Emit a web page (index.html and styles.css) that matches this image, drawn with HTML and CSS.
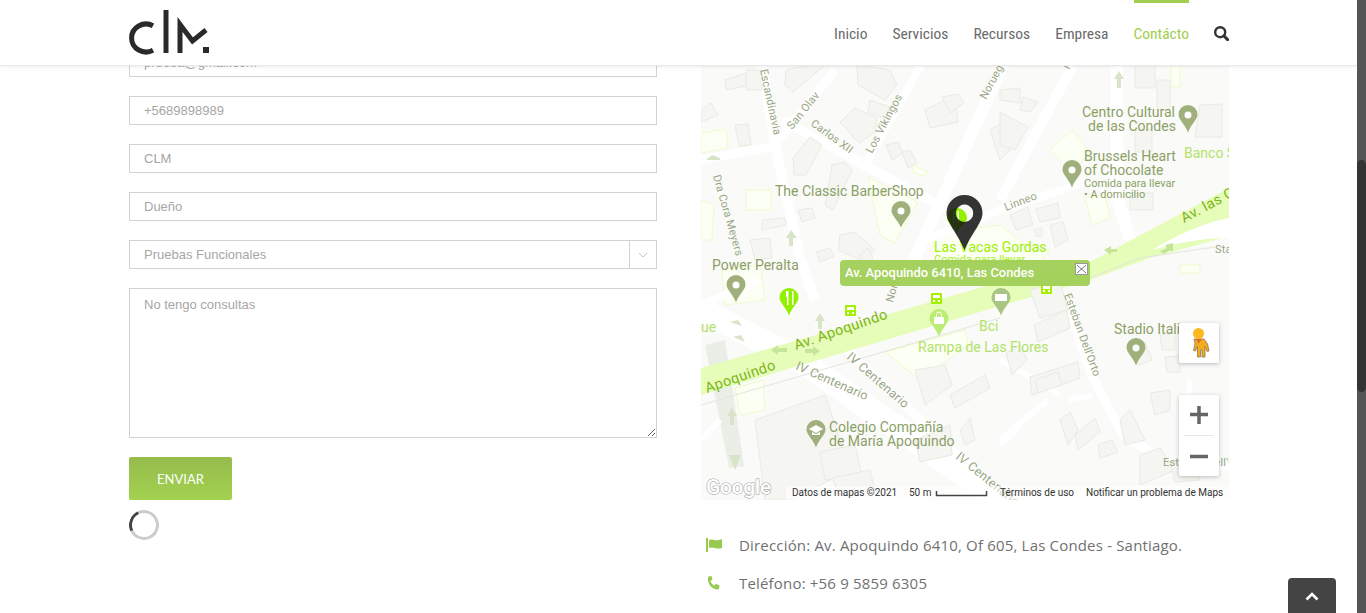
FILE: index.html
```html
<!DOCTYPE html>
<html lang="es">
<head>
<meta charset="utf-8">
<title>CLM - Contácto</title>
<link rel="stylesheet" href="styles.css">
</head>
<body>
<div class="viewport">
  <header class="site-header">
    <div class="header-inner">
      <a class="logo" href="#" aria-label="CLM">
        <svg width="82" height="46" viewBox="129 9 82 46">
          <path class="logo-stroke" d="M153 25.700A14.500 14 0 1 0 153 50.300"/>
          <path class="logo-stroke" d="M166 10V53"/>
          <path class="logo-stroke" d="M180 53V24.500L192.500 41L206 30"/>
          <rect class="logo-dot" x="203" y="47" width="6" height="6"/>
        </svg>
      </a>
      <nav class="nav">
        <a href="#">Inicio</a>
        <a href="#">Servicios</a>
        <a href="#">Recursos</a>
        <a href="#">Empresa</a>
        <a href="#" class="active">Contácto</a>
        <a href="#" class="search" aria-label="Buscar">
          <svg width="15" height="15" viewBox="0 0 15 15"><circle cx="6.200" cy="6.200" r="5" class="search-ring"/><path d="M9.800 9.800L13.600 13.600" class="search-handle"/></svg>
        </a>
      </nav>
    </div>
  </header>

  <main class="content">
    <form class="form">
      <input class="field" type="text" value="prueba@gmail.com">
      <input class="field" type="text" value="+5689898989">
      <input class="field" type="text" value="CLM">
      <input class="field" type="text" value="Dueño">
      <div class="select">
        <span class="select-value">Pruebas Funcionales</span>
        <span class="select-arrow"><svg width="10" height="6" viewBox="0 0 10 6"><path d="M1 1L5 5L9 1"/></svg></span>
      </div>
      <textarea class="message">No tengo consultas</textarea>
      <button class="submit" type="button">ENVIAR</button>
      <div class="spinner"></div>
    </form>

    <section class="aside">
      <div class="map">
        <svg class="map-canvas" width="528" height="435" viewBox="701 65 528 435">
          <rect class="m-bg" x="701" y="65" width="528" height="435"/>

          <g class="m-park">
            <path d="M701 133L726 129L728 148L701 153Z"/>
            <path d="M746 190L771 190L771 210L746 210Z"/>
            <path d="M868 177L918 202L895 243L880 235Z"/>
            <path d="M912 165L928 172L922 176L913 172Z"/>
            <path d="M1050 150L1072 130L1090 152L1072 172Z"/>
            <path d="M1085 198L1105 195L1110 218L1092 225Z"/>
            <path d="M722 270L760 265L765 300L725 305Z"/>
            <path d="M735 388L763 380L765 410L740 415Z"/>
            <path d="M885 352L965 330L968 345L920 380Z"/>
            <path d="M1180 265L1200 265L1200 273L1180 273Z"/>
            <path d="M930 235L1000 225L1030 248L1050 250L1040 262L940 262Z"/>
            <path d="M701 200L714 205L712 240L701 240Z"/>
            <path d="M1171 65H1180V87H1171Z"/>
          </g>

          <g class="m-road-grey">
            <path d="M705 345L725 340L744 466L729 468Z"/>
          </g>

          <g class="m-road">
            <path d="M762 65L775 145L800 258L815 300" stroke-width="10"/>
            <path d="M835 70L772 148" stroke-width="9"/>
            <path d="M701 160L775 146" stroke-width="9"/>
            <path d="M782 120L925 198L945 208" stroke-width="9"/>
            <path d="M921 65L862 170" stroke-width="8"/>
            <path d="M1003 65L913 262" stroke-width="12"/>
            <path d="M1073 65L1000 200" stroke-width="10"/>
            <path d="M925 240L1000 210L1085 182" stroke-width="8"/>
            <path d="M1117 65V198L1130 240" stroke-width="12"/>
            <path d="M701 310L800 360L1000 500" stroke-width="24"/>
            <path d="M847 350L1005 500" stroke-width="9"/>
            <path d="M1063 295L1093 378L1123 435L1170 464L1229 466" stroke-width="9"/>
            <path d="M701 305L760 280" stroke-width="8"/>
            <path d="M1000 360L1060 395" stroke-width="6"/>
            <path d="M1068 400L1092 396" stroke-width="6"/>
            <path d="M1190 380L1188 400" stroke-width="6"/>
            <path d="M701 440L720 420" stroke-width="6"/>
            <path d="M1000 445L1020 425" stroke-width="6"/>
            <path d="M1000 440L1048 400" stroke-width="6"/>
          </g>

          <path class="m-ave" d="M701 368L1000 282L1090 262L1229 188V236L1150 258L1090 280L1000 306L701 395Z"/>
          <path class="m-median" d="M1152 250C1175 236 1205 222 1229 218V238C1200 238 1175 244 1152 250Z"/>
          <path class="m-thin" d="M1090 278L1140 258L1215 247"/>
          <path class="m-thin" d="M701 405L1000 318"/>

          <g class="m-bld">
            <path d="M725 80L746 73L746 86L726 90Z"/>
            <path d="M746 70H762V90H746Z"/>
            <path d="M786 70L810 65H825L793 92L785 85Z"/>
            <path d="M857 65L890 70L897 85L885 100L858 85Z"/>
            <path d="M870 100L890 107L885 118L868 112Z"/>
            <path d="M840 122L855 108L877 118L875 132L859 143Z"/>
            <path d="M735 125L748 124L751 145L739 146Z"/>
            <path d="M701 110L711 103L718 115L701 122Z"/>
            <path d="M793 158L810 137L822 145L806 175L794 175Z"/>
            <path d="M832 165L845 162L852 170L833 210L825 205Z"/>
            <path d="M886 145L898 142L903 153L892 160Z"/>
            <path d="M902 152L910 150L917 163L908 168Z"/>
            <path d="M925 110L955 95L958 122L930 128Z"/>
            <path d="M942 97L958 94L964 103L950 113Z"/>
            <path d="M990 130L1000 124L1020 140L1000 160Z"/>
            <path d="M1000 90L1020 88L1020 103L1000 100Z"/>
            <path d="M1023 97L1038 102L1030 112L1020 110Z"/>
            <path d="M1000 112L1028 127L1015 150L1000 145Z"/>
            <path d="M1135 65H1155V88H1135Z"/>
            <path d="M1157 80H1170V110H1157Z"/>
            <path d="M1200 105L1222 104L1222 137H1195Z"/>
            <path d="M1135 130H1152V152H1135Z"/>
            <path d="M1130 193H1153V210H1130Z"/>
            <path d="M1010 215L1028 207L1033 225L1016 230Z"/>
            <path d="M1036 209L1058 203L1060 218L1040 222Z"/>
            <path d="M1034 230L1042 228L1042 236L1036 236Z"/>
            <path d="M1050 225L1063 222L1068 240L1055 247Z"/>
            <path d="M750 240L770 238L772 258L755 260Z"/>
            <path d="M762 220L785 218L786 225L762 230Z"/>
            <path d="M798 210L812 208L815 218L802 222Z"/>
            <path d="M840 235L855 232L875 250L865 262L838 250Z"/>
            <path d="M816 252L830 248L834 256L820 262Z"/>
            <path d="M860 255L868 248L873 258L865 265Z"/>
            <path d="M1030 290L1060 282L1068 310L1040 318Z"/>
            <path d="M1034 325L1067 310L1070 328L1038 342Z"/>
            <path d="M1006 353L1020 345L1027 360L1012 375Z"/>
            <path d="M1030 377L1078 362L1080 378L1032 395Z"/>
            <path d="M915 370L945 365L952 385L925 405Z"/>
            <path d="M950 395L985 375L990 388L955 408Z"/>
            <path d="M1035 380L1058 372L1062 385L1038 393Z"/>
            <path d="M1060 420L1070 412L1078 430L1068 445Z"/>
            <path d="M1075 435L1095 418L1100 432L1078 450Z"/>
            <path d="M1132 350L1145 342L1152 360L1138 365Z"/>
            <path d="M1160 335L1175 333V350H1162Z"/>
            <path d="M1165 357L1180 356V372L1167 372Z"/>
            <path d="M1150 393L1170 390L1170 410L1155 415Z"/>
            <path d="M1120 420L1130 410L1145 440L1125 445Z"/>
            <path d="M1098 445L1112 440L1118 452L1100 458Z"/>
            <path d="M1140 455L1160 448L1175 470L1140 485Z"/>
            <path d="M1170 462L1195 460L1200 480L1175 482Z"/>
            <path d="M755 420L825 395L850 470L790 500H765Z"/>
            <path d="M820 452L855 445L862 475L825 480Z"/>
            <path d="M832 478L870 470L875 490L840 495Z"/>
            <path d="M915 440L950 425L952 455L920 462Z"/>
            <path d="M960 430L970 418L975 440L965 445Z"/>
          </g>

          <g class="m-arrow">
            <path d="M706 160H720V158L712 155L706 160Z"/>
            <path d="M791 230L786 238H789V246H793V238H797Z"/>
            <path d="M1119 71L1114 79H1117V88H1121V79H1124Z"/>
            <path d="M820 313L815 321H818V329H822V321H825Z"/>
            <path d="M732 408L727 416H730V425H734V416H737Z"/>
            <path d="M730 322L742 326L738 320Z"/>
            <path d="M733 337L745 342L741 335Z"/>
            <path d="M729 455L735 470L741 455Z"/>
          </g>
          <g class="m-arrow-g">
            <path d="M771 350L778 345V348H787V352H778V355Z"/>
            <path d="M820 351L813 346V349H805V353H813V356Z"/>
            <path d="M1104 250L1111 246V249H1117V252H1111V255Z"/>
            <path d="M1173 243L1165 245L1167 248L1160 251L1164 254L1170 250L1173 252Z"/>
          </g>

          <g class="t-road">
            <text transform="translate(760 70) rotate(78)">Escandinavia</text>
            <text transform="translate(792 130) rotate(-51)">San Olav</text>
            <text transform="translate(810 125) rotate(36)">Carlos XII</text>
            <text transform="translate(872 154) rotate(-62)">Los Vikingos</text>
            <text transform="translate(986 100) rotate(-62)">Noruega</text>
            <text transform="translate(1069 70) rotate(-62)">I</text>
            <text transform="translate(713 176) rotate(74)">Dra Cora Meyers</text>
            <text transform="translate(1006 211) rotate(-21)">Linneo</text>
            <text transform="translate(893 303) rotate(-75)">Norte</text>
            <text transform="translate(1064 295) rotate(70)">Esteban Dell'Orto</text>
            <text class="t-wide" transform="translate(795 369) rotate(24)">IV Centenario</text>
            <text class="t-wide" transform="translate(846 358) rotate(41)">IV Centenario</text>
            <text class="t-wide" transform="translate(955 458) rotate(39)">IV Centenario</text>
            <text x="1163" y="466">Esteban Dell'Orto</text>
            <text x="1215" y="253">Sta</text>
          </g>

          <g class="t-poi">
            <text x="775" y="196">The Classic BarberShop</text>
            <text x="712" y="270">Power Peralta</text>
            <text x="1082" y="117">Centro Cultural</text>
            <text x="1088" y="131">de las Condes</text>
            <text x="1084" y="161">Brussels Heart</text>
            <text x="1084" y="175">of Chocolate</text>
            <text class="t-sub" x="1084" y="187">Comida para llevar</text>
            <text class="t-sub" x="1084" y="198">• A domicilio</text>
            <text x="1114" y="334">Stadio Itali</text>
            <text x="829" y="432">Colegio Compañía</text>
            <text x="829" y="446">de María Apoquindo</text>
          </g>

          <g class="t-ave">
            <text transform="translate(796 350) rotate(-19)">Av. Apoquindo</text>
            <text transform="translate(707 393) rotate(-19)">Apoquindo</text>
            <text transform="translate(1184 223) rotate(-28)">Av. las Condes</text>
          </g>

          <g class="t-lime">
            <text x="1184" y="158">Banco S</text>
            <text x="918" y="352">Rampa de Las Flores</text>
            <text x="979" y="331">Bci</text>
            <text x="701" y="332">ue</text>
          </g>

          <text class="t-vacas" x="934" y="252">Las Vacas Gordas</text>
          <text class="t-vacas-sub" x="934" y="263">Comida para llevar</text>

          <g class="pin-poi">
            <path d="M901 201a9.500 9.500 0 0 1 9.500 9.500c0 5-6 9-9.500 17c-3.500-8-9.500-12-9.500-17a9.500 9.500 0 0 1 9.500-9.500Z"/>
            <path d="M1188 105a9.500 9.500 0 0 1 9.500 9.500c0 5-6 9-9.500 18c-3.500-9-9.500-13-9.500-18a9.500 9.500 0 0 1 9.500-9.500Z"/>
            <path d="M1072 160a9.500 9.500 0 0 1 9.500 9.500c0 5-6 9-9.500 18c-3.500-9-9.500-13-9.500-18a9.500 9.500 0 0 1 9.500-9.500Z"/>
            <path d="M1136 338a9.500 9.500 0 0 1 9.500 9.500c0 5-6 9-9.500 18c-3.500-9-9.500-13-9.500-18a9.500 9.500 0 0 1 9.500-9.500Z"/>
            <path d="M736 275a9.500 9.500 0 0 1 9.500 9.500c0 5-6 9-9.500 18c-3.500-9-9.500-13-9.500-18a9.500 9.500 0 0 1 9.500-9.500Z"/>
            <path d="M816 420a9.500 9.500 0 0 1 9.500 9.500c0 5-6 9-9.500 18c-3.500-9-9.500-13-9.500-18a9.500 9.500 0 0 1 9.500-9.500Z"/>
          </g>
          <path class="pin-bank" d="M1001 288a9.500 9.500 0 0 1 9.500 9.500c0 5-6 9-9.500 18c-3.500-9-9.500-13-9.500-18a9.500 9.500 0 0 1 9.500-9.500Z"/>
          <g class="pin-hole">
            <circle cx="901" cy="211" r="3.500"/>
            <circle cx="1188" cy="115" r="3.500"/>
            <circle cx="1072" cy="170" r="3.500"/>
            <circle cx="1136" cy="348" r="3.500"/>
            <circle cx="736" cy="285" r="3.500"/>
          </g>
          <path class="pin-hole" d="M809 429L816 425L823 429L816 433Z"/>
          <path class="pin-hole" d="M812 432V435H820V432L816 434Z"/>
          <rect class="pin-hole" x="995" y="294" width="12" height="7"/>

          <path class="pin-lime" d="M789 288a9.500 9.500 0 0 1 9.500 9.500c0 5-6 9-9.500 18c-3.500-9-9.500-13-9.500-18a9.500 9.500 0 0 1 9.500-9.500Z"/>
          <path class="pin-lime-soft" d="M939 309a9.500 9.500 0 0 1 9.500 9.500c0 5-6 9-9.500 18c-3.500-9-9.500-13-9.500-18a9.500 9.500 0 0 1 9.500-9.500Z"/>
          <path class="pin-hole" d="M786 291V297h1v8h1.500v-14ZM792 291v14h1.500v-14Z"/>
          <rect class="pin-hole" x="934" y="317" width="10" height="7"/>
          <path class="bag-handle" d="M936.500 317v-2.500a2.500 2.500 0 0 1 5 0v2.500"/>

          <g class="bus">
            <rect x="931" y="293" width="11" height="11" rx="1"/>
            <rect x="845" y="305" width="11" height="11" rx="1"/>
            <rect x="1041" y="284" width="11" height="10" rx="1"/>
          </g>
          <g class="bus-in">
            <rect x="933" y="295" width="7" height="3"/>
            <rect x="847" y="307" width="7" height="3"/>
            <rect x="1043" y="286" width="7" height="3"/>
            <rect x="933" y="300" width="2" height="2"/>
            <rect x="938" y="300" width="2" height="2"/>
            <rect x="847" y="312" width="2" height="2"/>
            <rect x="852" y="312" width="2" height="2"/>
            <rect x="1043" y="290" width="2" height="2"/>
            <rect x="1048" y="290" width="2" height="2"/>
          </g>

          <path class="pin-lime" d="M957 208a10 10 0 0 1 10 10c0 5-6 7-10 15c-4-8-10-10-10-15a10 10 0 0 1 10-10Z"/>
          <path class="pin-hole" d="M953 211h1.200v12h-1.200ZM957.500 211h1.500v12h-1.500Z"/>
          <path class="pin-main" fill-rule="evenodd" d="M964.500 195a18 18 0 0 1 18 18c0 10-11 20-18 37c-7-17-18-27-18-37a18 18 0 0 1 18-18ZM964.500 204.500a8.700 8.700 0 1 0 0.010 0Z"/>

          <g class="tip">
            <rect class="tip-bg" x="840" y="260" width="250" height="26" rx="4"/>
            <text class="tip-text" x="845" y="277">Av. Apoquindo 6410, Las Condes</text>
            <rect class="tip-x-box" x="1075.500" y="263.500" width="12" height="11"/>
            <path class="tip-x" d="M1077 265L1086 273M1086 265L1077 273"/>
          </g>

          <text class="t-google" x="706" y="494">Google</text>

          <rect class="m-foot" x="786" y="486" width="443" height="14"/>
          <g class="t-foot">
            <text x="792" y="496">Datos de mapas ©2021</text>
            <text x="909" y="496">50 m</text>
            <text x="1000" y="496">Términos de uso</text>
            <text x="1086" y="496">Notificar un problema de Maps</text>
          </g>
          <path class="m-scale" d="M936.500 491V495.500H986.500V491"/>

          <g class="ctl">
            <rect x="1179" y="323" width="40" height="40" rx="2"/>
            <rect x="1179" y="395" width="40" height="81" rx="2"/>
          </g>
          <path class="ctl-div" d="M1184 435.500H1214"/>
          <path class="ctl-sign" d="M1190 414.500H1208M1199 406V424M1190 456.500H1208"/>
          <g class="peg">
            <path class="peg-body" d="M1194 339h10l3.500 5 1.500 7-2 .5-2-5V357h-3v-7h-1.500v7h-3v-11l-2 5-2-.5 1.500-7Z"/>
            <circle class="peg-head" cx="1198.500" cy="333.500" r="5.500"/>
            <path class="peg-scarf" d="M1195.500 339h6.500l-3.200 4.500Z"/>
          </g>
        </svg>
      </div>

      <ul class="contact">
        <li>
          <svg class="contact-icon" width="17" height="14" viewBox="0 0 17 14"><path d="M0 0H2V14H0Z"/><path d="M3 2C7 0 9 4 16 1V10C10 12 7 8 3 10Z"/></svg>
          <span>Dirección: Av. Apoquindo 6410, Of 605, Las Condes - Santiago.</span>
        </li>
        <li>
          <svg class="contact-icon" width="17" height="14" viewBox="0 0 17 14"><path d="M2.500 0.500L5.500 0L6.500 3.500L4.500 5C5.200 7 6.500 8.500 8.500 9.500L10 7.800L13.500 9.500L13 12.500C12.500 13.500 11 13.800 9.500 13.200C5 12 2 8 2 3C2 2 2 1 2.500 0.500Z"/></svg>
          <span>Teléfono: +56 9 5859 6305</span>
        </li>
      </ul>
    </section>
  </main>

  <a class="to-top" href="#" aria-label="Subir">
    <svg width="14" height="9" viewBox="0 0 14 9"><path d="M1.500 7.500L7 2L12.500 7.500"/></svg>
  </a>
</div>
<div class="scrollbar"><div class="thumb"></div></div>
</body>
</html>
```
FILE: styles.css
```css
* { box-sizing: border-box; }
html, body { height: 100%; margin: 0; overflow: hidden; }
body { display: flex; background: #fff; font-family: "Liberation Sans", Arial, sans-serif; }

.viewport { position: relative; flex: 1; height: 613px; overflow: hidden; background: #fff; }

.scrollbar { width: 9px; height: 613px; background: #555; padding-top: 160px; }
.thumb { height: 232px; background: #333; border-radius: 5px; }

.site-header {
  position: absolute; top: 0; left: 0; right: 0; height: 66px; background: #fff;
  border-bottom: 1px solid #e9e9e9; box-shadow: 0 1px 3px rgba(0,0,0,.07); z-index: 5;
}
.header-inner { width: 1100px; margin-left: 129px; height: 65px; display: flex; justify-content: space-between; }
.logo { display: block; margin-top: 9px; height: 46px; }
.logo-stroke { fill: none; stroke: #2a2a2a; stroke-width: 5; }
.logo-dot { fill: #2a2a2a; }

.nav { display: flex; gap: 25px; align-items: stretch; font-family: "Liberation Sans Narrow", "Roboto Condensed", Roboto, sans-serif; font-size: 15.500px; }
.nav a { display: flex; align-items: center; color: #6a6a6a; text-decoration: none; border-top: 3px solid transparent; height: 65px; padding-bottom: 1px; }
.nav a.active { color: #a0ce4e; border-top-color: #a0ce4e; }
.search-ring { fill: none; stroke: #333; stroke-width: 2.400; }
.search-handle { fill: none; stroke: #333; stroke-width: 3; stroke-linecap: round; }

.content { display: flex; gap: 44px; width: 1100px; margin-left: 129px; padding-top: 48px; }

.form { width: 528px; display: flex; flex-direction: column; gap: 19px; }
.field, .select, .message {
  display: block; width: 100%; border: 1px solid #d2d2d2; background: #fff; color: #a8a6a4;
  font-family: "Liberation Sans", Arial, sans-serif; font-size: 13px; padding: 0 14px; margin: 0; border-radius: 0; outline: 0;
}
.field { height: 29px; }
.select { height: 29px; display: flex; align-items: center; padding-right: 0; }
.select-value { flex: 1; }
.select-arrow { width: 27px; height: 27px; border-left: 1px solid #d2d2d2; display: flex; align-items: center; justify-content: center; }
.select-arrow path { fill: none; stroke: #c4c4c4; stroke-width: 1; }
.message { height: 150px; padding-top: 8px; padding-bottom: 8px; line-height: 16px; }
.submit {
  display: block; width: 103px; height: 43px; border: 0; border-radius: 2px; color: #fff; padding: 0; cursor: pointer;
  background: linear-gradient(#95bb4b, #a3d250); font-family: Lato, sans-serif; font-size: 13px;
}
.spinner {
  width: 30px; height: 30px; margin-top: -9px; border-radius: 50%;
  border: 3px solid #ccc; border-left-color: #444; transform: rotate(20deg);
}

.aside { width: 528px; margin-top: -48px; }
.map { height: 500px; padding-top: 65px; }
.map-canvas { display: block; }

.m-bg { fill: #fafbf8; }
.m-park path { fill: #fcfff3; stroke: #edfbcd; stroke-width: 1; }
.m-road path { fill: none; stroke: #fff; stroke-linecap: butt; }
.m-road-grey path { fill: #ebede7; }
.m-ave { fill: #e6fcb9; }
.m-median { fill: #fff; }
.m-thin { fill: none; stroke: #e2e5db; stroke-width: 1; }
.m-bld path { fill: #f5f6f2; stroke: #e8ebe3; stroke-width: 1; }
.m-arrow path { fill: #d9e3c8; }
.m-arrow-g path { fill: #c5e69a; }

.map text { font-family: Roboto, sans-serif; }
.t-road text { font-size: 11px; fill: #98a684; letter-spacing: .2px; }
.t-road .t-wide { font-size: 12.500px; }
.t-poi text { font-size: 14px; fill: #8b9f67; }
.t-poi .t-sub { font-size: 11px; }
.t-ave text { font-size: 14.500px; fill: #7cb518; letter-spacing: .4px; }
.t-lime text { font-size: 14px; fill: #b2e26a; }
.t-vacas { font-size: 14px; fill: #9cf000; }
.t-vacas-sub { font-size: 11px; fill: #a6f01c; }

.pin-poi path { fill: #9fb07c; }
.pin-bank { fill: #a9c583; }
.pin-hole, .pin-hole circle { fill: #fff; }
.pin-lime { fill: #93f000; }
.pin-lime-soft { fill: #bdec74; }
.bag-handle { fill: none; stroke: #fff; stroke-width: 1; }
.bus rect { fill: #a4f000; }
.bus-in rect { fill: #fff; }
.pin-main { fill: #111; fill-opacity: .85; }

.tip-bg { fill: #a0cf55; fill-opacity: .95; }
.map .tip-text { font-size: 12.900px; font-weight: 500; fill: #fff; }
.tip-x-box { fill: #fff; stroke: #999; stroke-width: 1; }
.tip-x { fill: none; stroke: #777; stroke-width: 1; }

.map .t-google { font-size: 21px; font-weight: 500; fill: #fff; stroke: #999; stroke-width: 1; paint-order: stroke; letter-spacing: -.3px; }

.m-foot { fill: #fff; fill-opacity: .55; }
.t-foot text { font-size: 10px; fill: #333; }
.m-scale { fill: none; stroke: #444; stroke-width: 1.500; }

.ctl rect { fill: #fff; filter: drop-shadow(0 1px 2px rgba(0,0,0,.25)); }
.ctl-div { stroke: #e6e6e6; stroke-width: 1; fill: none; }
.ctl-sign { stroke: #666; stroke-width: 3.500; fill: none; }
.peg-body { fill: #f4ab1e; stroke: #8a7a5a; stroke-width: .8; }
.peg-head { fill: #fbb81f; }
.peg-scarf { fill: #d9702a; }

.contact { list-style: none; margin: 0; padding: 0 0 0 5px; font-family: "Open Sans", sans-serif; font-size: 15px; letter-spacing: .18px; color: #717171; }
.contact li { display: flex; align-items: center; height: 38px; gap: 16px; }
.contact li:first-child { margin-top: 26px; }
.contact-icon { fill: #98ca50; flex: none; }

.to-top {
  position: absolute; right: 21px; bottom: 0; width: 48px; height: 35px; background: #444;
  border-radius: 4px 4px 0 0; display: flex; align-items: center; justify-content: center; padding-top: 2px;
}
.to-top path { fill: none; stroke: #fff; stroke-width: 2.600; }
```
